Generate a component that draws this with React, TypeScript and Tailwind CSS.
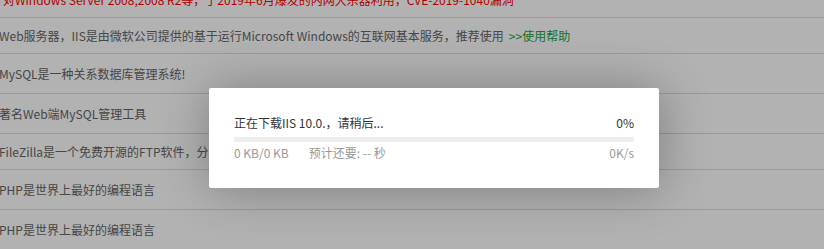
const rows = [
  { h: "h-[36px]", text: "针对Windows Server 2008,2008 R2等，于2019年6月爆发的内网大杀器利用，CVE-2019-1040漏洞", red: true },
  { h: "h-[36px]", text: "Web服务器，IIS是由微软公司提供的基于运行Microsoft Windows的互联网基本服务，推荐使用", help: true },
  { h: "h-[40px]", text: "MySQL是一种关系数据库管理系统!" },
  { h: "h-[40px]", text: "著名Web端MySQL管理工具" },
  { h: "h-[36px]", text: "FileZilla是一个免费开源的FTP软件，分为客户端版本和服务器版本，具备所有的FTP软件功能" },
  { h: "h-[40px]", text: "PHP是世界上最好的编程语言" },
  { h: "h-[40px]", text: "PHP是世界上最好的编程语言" },
];

export default function App() {
  return (
    <div
      className="relative h-[249px] w-[824px] overflow-hidden bg-white"
      style={{ fontFamily: '"Noto Sans CJK SC", "Noto Sans", sans-serif' }}
    >
      <div className="-mt-[18px] flex flex-col">
        {rows.map((row, i) => (
          <div
            key={i}
            className={`flex ${row.h} items-center whitespace-nowrap border-b border-[#ddd] text-[12px] ${
              row.red ? "-ml-[9px] text-[#ff0000]" : "-ml-[1px] text-[#666]"
            }`}
          >
            <span>{row.text}</span>
            {row.help ? (
              <span className="ml-[5px] text-[#20a53a]">&gt;&gt;使用帮助</span>
            ) : null}
          </div>
        ))}
      </div>

      <div className="absolute inset-0 bg-black/30" />

      <div className="absolute left-[209px] top-[88px] h-[100px] w-[450px] rounded-[2px] bg-white px-[25px] pt-[27px] shadow-[1px_1px_50px_rgba(0,0,0,0.3)]">
        <div className="flex h-[16px] items-center justify-between text-[12px] leading-[16px] text-[#333]">
          <span>正在下载IIS 10.0.，请稍后...</span>
          <span>0%</span>
        </div>
        <div className="mt-[6px] h-[5px] w-full bg-[#eee]">
          <div className="h-full bg-[#20a53a]" style={{ width: "0%" }} />
        </div>
        <div className="mt-[3px] flex h-[16px] items-center text-[12px] leading-[16px] text-[#999]">
          <span>0 KB/0 KB</span>
          <span className="ml-[20px]">预计还要: -- 秒</span>
          <span className="ml-auto">0K/s</span>
        </div>
      </div>
    </div>
  );
}
